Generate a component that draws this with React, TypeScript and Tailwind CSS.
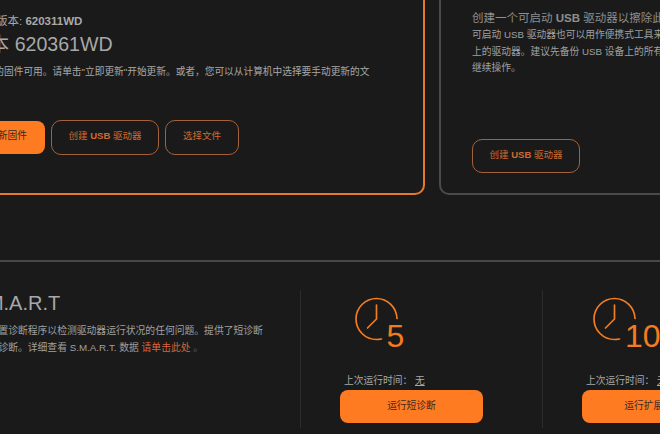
const FONT = "font-['Liberation_Sans','Noto_Sans_CJK_SC',sans-serif]";
const OUTLINE = "rounded-[10px] border border-[#a5623a] pb-[2px] text-[9.5px] text-[#d06a30]";

function Clock({ label, wide }: { label: string; wide?: boolean }) {
  return (
    <div className={`relative h-[52px] w-[100px] ${wide ? "ml-[12px]" : "ml-[15.5px]"}`}>
      <svg width="44" height="44" viewBox="0 0 44 44" fill="none" stroke="#f47c20" strokeWidth="1.7" className="absolute left-[-1px] top-[-1px]">
        <path d="M42 21.5C41.6 10.4 32.6 1.5 21.5 1.5 10.2 1.5 1 10.7 1 22s9.2 20.5 20.5 20.5c1.4 0 2.8-.1 5-.5" strokeLinecap="round" />
        <path d="M21.5 8v14l-9 9" strokeLinecap="round" strokeLinejoin="round" />
      </svg>
      <span className="absolute left-[31px] top-[20px] text-[32px] leading-[37px] text-[#f47c20]">{label}</span>
    </div>
  );
}

function DiagColumn({ label, action, last, wide }: { label: string; action: string; last: string; wide?: boolean }) {
  return (
    <div className="w-[242px] shrink-0 border-r border-[#2c2c2c] pl-[39px] pt-[8px]">
      <Clock label={label} wide={wide} />
      <p className="ml-[4px] mt-[24px] whitespace-nowrap text-[9.75px] leading-[14px] text-[#a8a8a8]">
        上次运行时间： <span className="underline">{last}</span>
      </p>
      <button className="mt-[2px] flex h-[32.5px] w-[143px] items-center justify-center rounded-[8px] bg-[#ff7b22] text-[9.75px] text-[#3a2a20]">
        {action}
      </button>
    </div>
  );
}

export default function App() {
  return (
    <div className={`h-[434px] w-[660px] overflow-hidden bg-[#1a1a1a] ${FONT}`}>
      <div className="-ml-[60px] -mt-[30px] w-[1100px]">
        <div className="flex gap-[14px]">
          <section className="h-[225px] w-[485px] shrink-0 rounded-[10px] border-2 border-[#e8782c] pl-[28px] pt-[41px]">
            <p className="ml-[3px] text-[11.5px] leading-[16px] text-[#a9a9a9]">
              当前版本: <b>620311WD</b>
            </p>
            <h2 className="mt-[2px] text-[19.6px] font-normal leading-[26px] text-[#a8a8a8]">版本 620361WD</h2>
            <p className="ml-[5px] mt-[8px] whitespace-nowrap text-[9.7px] leading-[14px] text-[#a8a8a8]">
              有新的固件可用。请单击"立即更新"开始更新。或者，您可以从计算机中选择要手动更新的文
            </p>
            <div className="mt-[41px] flex items-center gap-[6px]">
              <button className="h-[32.5px] w-[75px] rounded-[8px] bg-[#ff7b22] pb-[2px] text-[9.75px] text-[#3a2a20]">更新固件</button>
              <button className={`h-[34.5px] w-[108px] ${OUTLINE}`}>
                创建 <b>USB</b> 驱动器
              </button>
              <button className={`h-[34.5px] w-[74px] ${OUTLINE}`}>选择文件</button>
            </div>
          </section>
          <section className="h-[225px] w-[400px] shrink-0 rounded-[10px] border-2 border-[#4a4a4a] pl-[31px] pt-[38px]">
            <p className="whitespace-nowrap text-[11.5px] leading-[16px] text-[#8e8e8e]">
              创建一个可启动 <b>USB</b> 驱动器以擦除此驱动器上的所有数据
            </p>
            <p className="mt-[1px] whitespace-nowrap text-[9.75px] leading-[16.5px] text-[#a0a0a0]">
              可启动 USB 驱动器也可以用作便携式工具来擦除其他系统
              <br />
              上的驱动器。建议先备份 USB 设备上的所有数据，然后再
              <br />
              继续操作。
            </p>
            <button className={`mt-[62px] h-[34.5px] w-[108px] ${OUTLINE}`}>
              创建 <b>USB</b> 驱动器
            </button>
          </section>
        </div>

        <div className="mt-[65px] h-[2px] bg-[#484848]" />

        <div className="mt-[28px] flex h-[138px]">
          <div className="w-[361px] shrink-0 border-r border-[#2c2c2c] pl-[28px] pt-[1px]">
            <h2 className="whitespace-nowrap text-[20px] font-normal leading-[24px] text-[#a8a8a8]">
              S.M.A.R.T
            </h2>
            <p className="ml-[1px] mt-[7px] whitespace-nowrap text-[9.8px] leading-[17px] text-[#a0a0a0]">
              使用内置诊断程序以检测驱动器运行状况的任何问题。提供了短诊断
              <br />
              和扩展诊断。详细查看 S.M.A.R.T. 数据 <span className="text-[#d9653a]">请单击此处</span> <span className="text-[#666666]">。</span>
            </p>
          </div>
          <DiagColumn label="5" action="运行短诊断" last="无" />
          <DiagColumn label="10" action="运行扩展诊断" last="无" wide />
        </div>
      </div>
    </div>
  );
}
